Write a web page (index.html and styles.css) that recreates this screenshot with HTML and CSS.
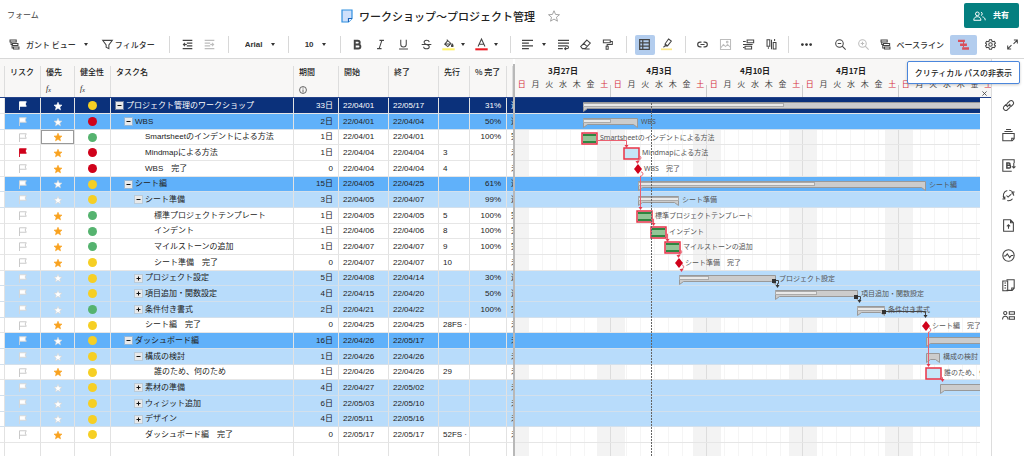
FILE: index.html
```html
<!DOCTYPE html>
<html lang="ja">
<head>
<meta charset="utf-8">
<meta name="viewport" content="width=device-width, initial-scale=1">
<title>ワークショップ〜プロジェクト管理</title>
<link rel="stylesheet" href="styles.css">
</head>
<body>
<header class="titlebar">
  <a class="crumb" href="#">フォーム</a>
  <div class="doc">
    <svg class="doc-icon" viewBox="0 0 12 14"><path d="M1 1h10v8.500l-3.500 3.500H1z" fill="#cfe0fb" stroke="#2f8fe0" stroke-width="1.200"/><path d="M11 9.500H7.500V13" fill="#fff" stroke="#1d63b8" stroke-width="1.200"/></svg>
    <h1>ワークショップ〜プロジェクト管理</h1>
    <button class="plain" aria-label="お気に入り"><svg class="star-icon" viewBox="0 0 16 16"><path d="M8 1l2.100 4.900 5.200.4-4 3.400 1.300 5.200L8 12.100l-4.600 2.800 1.300-5.200-4-3.400 5.200-.4z"/></svg></button>
  </div>
  <button class="share"><svg viewBox="0 0 18 14"><circle cx="6" cy="4" r="2.600"/><path d="M1 13c0-3.500 2-5 5-5s5 1.500 5 5z"/><path d="M11 1.600a2.500 2.500 0 0 1 0 4.800M13 8.200c2.500.4 4 2 4 4.800"/></svg>共有</button>
</header>

<div class="toolbar" role="toolbar">
  <div class="group views">
    <button class="labelled view"><svg class="ic" viewBox="0 0 16 16"><path d="M1.500 1.500h9v3h-9zM5 6.500h8v3H5zM6.500 11.500h8v3h-8zM3 4.500V8h2M4.500 8v5h2"/></svg>ガント ビュー<i class="caret"></i></button>
    <button class="labelled filter"><svg class="ic" viewBox="0 0 16 16"><path d="M1 2h14l-5 6.500V14l-4-2V8.500z"/></svg>フィルター</button>
  </div>
  <div class="group indent">
    <button class="tool" aria-label="インデント解除"><svg class="ic" viewBox="0 0 16 16"><path d="M1 2h14M7 6h8M7 10h8M1 14h14M4.500 5.500L2 8l2.500 2.500M2 8h5"/></svg></button>
    <button class="tool off" aria-label="インデント"><svg class="ic" viewBox="0 0 16 16"><path d="M1 2h14M1 6h8M1 10h8M1 14h14M11.500 5.500L14 8l-2.500 2.500M14 8H9"/></svg></button>
  </div>
  <div class="group font"><select class="font-name" aria-label="フォント"><option>Arial</option></select><i class="caret"></i></div>
  <div class="group size"><select class="font-size" aria-label="サイズ"><option>10</option></select><i class="caret"></i></div>
  <div class="group style">
    <button class="tool wide" aria-label="太字"><svg class="ic" viewBox="0 0 16 16"><path stroke-width="2.800" d="M4 2.500h4.500a2.700 2.700 0 0 1 0 5.400H4zM4 7.900h5.300a2.900 2.900 0 0 1 0 5.800H4z"/></svg></button>
    <button class="tool wide" aria-label="斜体"><svg class="ic" viewBox="0 0 16 16"><path d="M6.500 2H13M3 14h6.500M10 2L6 14"/></svg></button>
    <button class="tool wide" aria-label="下線"><svg class="ic" viewBox="0 0 16 16"><path d="M4 1v6.500a4 4 0 0 0 8 0V1M1.500 14.500h13"/></svg></button>
    <button class="tool wide" aria-label="取り消し線"><svg class="ic" viewBox="0 0 16 16"><path d="M12 4.500C11.500 1 4.500 1 4.500 4.800c0 1.700 1.500 2.500 3.500 3.100 2.500.6 4 1.300 4 3.300 0 4-8 4-8.200 0M1 8h14"/></svg></button>
    <button class="tool" aria-label="背景色"><svg class="ic" viewBox="0 0 16 16"><path d="M7 2.500L2.500 7.500 7 11l4.500-4.500zM5.500 1l2 2M3 7.300h8"/><path d="M13.500 7.500c1.500 2 1.500 3.500 0 3.500s-1.500-1.500 0-3.500z" fill="#444"/><path d="M-1 15h18" stroke="#fff36b" stroke-width="3"/></svg></button><i class="caret"></i>
    <button class="tool text-color" aria-label="文字色"><svg class="ic" viewBox="0 0 16 16"><path d="M3 11L8 0l5 11M4.700 7.500h6.600"/><path d="M-1 15h18" stroke="#ec1c24" stroke-width="3"/></svg></button><i class="caret"></i>
  </div>
  <div class="group para">
    <button class="tool" aria-label="配置"><svg class="ic" viewBox="0 0 16 16"><path d="M0 2h16M0 6h10M0 10h16M0 14h10"/></svg></button><i class="caret align-caret"></i>
    <button class="tool" aria-label="折り返し"><svg class="ic" viewBox="0 0 16 16"><path d="M0 2h16M0 6h16M0 10h7M0 14h7M7 10h6c3 0 3 4 0 4h-3M11.500 12L9.500 14l2 2"/></svg></button>
    <button class="tool" aria-label="書式のクリア"><svg class="ic" viewBox="0 0 16 16"><path d="M10 1.500L15 6l-7.500 8h-4L1 11zM5.500 6.500l5 4.500M6.500 14.500H14"/></svg></button>
    <button class="tool" aria-label="書式のコピー"><svg class="ic" viewBox="0 0 16 16"><path d="M2 1.500h10v4H2zM12 3.500h3V8H7.500v2.500M6 10.500h3V15H6z"/></svg></button>
  </div>
  <div class="group marks">
    <button class="tool on" aria-label="グリッド"><svg class="ic" viewBox="0 0 16 16"><path stroke-width="1.800" d="M1 1h14v14H1zM5.500 1v14M1 5.500h14M1 10.500h14"/></svg></button>
    <button class="tool" aria-label="変更を強調"><svg class="ic" viewBox="0 0 16 16"><path d="M11 0l4 3-5.500 7H6V7zM6 7l3.500 3M6 10l-2.500 2"/><path d="M0 15h16" stroke="#fbe88a" stroke-width="2.500"/></svg></button>
  </div>
  <div class="group insert">
    <button class="tool wide" aria-label="リンク"><svg class="ic" viewBox="0 0 16 16"><path stroke-width="1.700" d="M6.500 4.500h-2a3.500 3.500 0 0 0 0 7h2M9.500 4.500h2a3.500 3.500 0 0 1 0 7h-2M5 8h6"/></svg></button>
    <button class="tool wide off" aria-label="画像"><svg class="ic" viewBox="0 0 16 16"><path d="M.7.700h14.600v14.600H.7zM1 13l4-5 3 3 3-3 4 4"/><circle cx="10.500" cy="4.500" r="1.200"/></svg></button>
    <button class="tool wide" aria-label="行"><svg class="ic" viewBox="0 0 16 16"><path d="M6 1.500h9.500v4H6zM3 10.500h9.500v4H3zM0 3.500h4M0 8h14M0 12.500h2"/></svg></button>
    <button class="tool wide" aria-label="列"><svg class="ic" viewBox="0 0 16 16"><path d="M1.500 1h4v9.500h-4zM10.500 5h4v9.500h-4zM8 1v14M12.500 0v3M3.500 12v2"/></svg></button>
  </div>
  <div class="group more"><button class="tool" aria-label="その他"><svg class="ic" viewBox="0 0 16 16"><g fill="#333" stroke="none"><circle cx="2" cy="8" r="2"/><circle cx="8" cy="8" r="2"/><circle cx="14" cy="8" r="2"/></g></svg></button></div>
  <div class="right-tools">
    <button class="tool wide" aria-label="縮小"><svg class="ic" viewBox="0 0 16 16"><circle cx="6.500" cy="6.500" r="5.500"/><path d="M10.500 10.500L15.500 15.500M4 6.500h5"/></svg></button>
    <button class="tool wide off" aria-label="拡大"><svg class="ic" viewBox="0 0 16 16"><circle cx="6.500" cy="6.500" r="5.500"/><path d="M10.500 10.500L15.500 15.500M4 6.500h5M6.500 4v5"/></svg></button>
    <button class="labelled baseline"><svg class="ic" viewBox="0 0 16 16"><path d="M1.500 1.500h9v3h-9zM5 6.500h9v3H5zM6.500 11.500h8v3h-8zM2.500 4.500V8H5M4 8v5h2.500"/></svg>ベースライン</button>
    <button class="tool critical" aria-label="クリティカル パスの非表示" aria-describedby="tip"><svg class="ic" viewBox="0 0 16 16"><path d="M0 1h10v3.500H0zM3 6.500h10V10H3zM6 12h10v3.500H6z" fill="#d8505c" stroke="none"/><path d="M8 4v8" stroke="#d8505c"/></svg></button>
    <button class="tool" aria-label="設定"><svg class="ic" viewBox="0 0 16 16"><circle cx="8" cy="8" r="2.500"/><path d="M6.500 1h3l.5 2 1.700 1 2-.6 1.500 2.600-1.500 1.300v1.400l1.500 1.300-1.500 2.600-2-.6-1.700 1-.5 2h-3L6 13l-1.700-1-2 .6L.8 10l1.500-1.300V7.300L.8 6l1.500-2.600 2 .6L6 3z"/></svg></button>
    <button class="tool" aria-label="全画面"><svg class="ic" viewBox="0 0 16 16"><path d="M10 1.500h5v5M15 1.500L9.500 7M6 14.500H1v-5M1 14.500L6.500 9"/></svg></button>
  </div>
  <div class="tooltip" id="tip" role="tooltip">クリティカル パスの非表示</div>
</div>

<main class="sheet">
  <table class="grid">
    <colgroup><col class="c-gut"><col class="c-risk"><col class="c-pri"><col class="c-health"><col class="c-task"><col class="c-dur"><col class="c-date"><col class="c-date"><col class="c-pred"><col class="c-pct"><col class="c-rest"></colgroup>
    <thead><tr>
      <th></th><th>リスク</th><th>優先<span class="fx">f<sub>x</sub></span></th><th>健全性<span class="fx">f<sub>x</sub></span></th><th>タスク名</th>
      <th>期間<svg class="info" viewBox="0 0 10 10"><circle cx="5" cy="5" r="4.300"/><path d="M5 2v1.200M5 4.300V8"/></svg></th><th>開始</th><th>終了</th><th>先行</th><th>% 完了</th><th></th>
    </tr></thead>
    <tbody id="rows"></tbody>
  </table>
  <div class="splitter"></div>
  <section class="gantt">
    <div class="calendar" id="calendar"></div>
    <button class="close plain" aria-label="閉じる"><svg viewBox="0 0 6 6"><path d="M.5.500l5 5M5.500.500l-5 5"/></svg></button>
    <div class="chart">
      <div id="stripes"></div>
      <svg class="bars" id="bars" aria-label="ガント チャート"></svg>
    </div>
  </section>
  <nav class="rail">
    <button aria-label="添付"><svg viewBox="0 0 16 16"><path d="M6.500 9.500a3 3 0 0 1 0-4l3-3a3 3 0 0 1 4.200 4.200L11 9.500M9.500 6.500a3 3 0 0 1 0 4l-3 3a3 3 0 0 1-4.200-4.200L5 6.500M6 10l4-4"/></svg></button>
    <button aria-label="会話"><svg viewBox="0 0 16 16"><path d="M1 5.500h14v6.500l-2.500 2.500H1zM15 11.500h-3v3M3 3h10M5 .7h6"/></svg></button>
    <button aria-label="ブループリント"><svg viewBox="0 0 16 16"><path d="M15 5V1H1v14h11M14.500 5v6M12.500 9l2 2 2-2"/><path stroke-width="1.800" d="M6 5h2.500a1.400 1.400 0 0 1 0 2.800H6zM6 7.800h3a1.600 1.600 0 0 1 0 3.200H6z"/></svg></button>
    <button aria-label="更新リクエスト"><svg viewBox="0 0 16 16"><path d="M3 12A6.400 6.400 0 0 1 6.500 1.800M9 1.600a6.400 6.400 0 0 1 5.400 6.800M13 12a6.400 6.400 0 0 1-6.500 2.200M0.500 12.300H3.500V9.300M15.500 3.700H12.500V6.700M5.500 8l2 2 3.500-3.500"/></svg></button>
    <button aria-label="公開"><svg viewBox="0 0 16 16"><path d="M2 1h8.500L14 4.500V15H2zM10.500 1v3.500H14M8 12V7M6 9l2-2 2 2"/></svg></button>
    <button aria-label="アクティビティ"><svg viewBox="0 0 16 16"><circle cx="8" cy="8" r="7"/><path d="M2 8.500h2.500L6.500 6l3 4.500 2-2.500H14"/></svg></button>
    <button aria-label="概要"><svg viewBox="0 0 16 16"><path d="M5.500 1H15v10.500L12.500 14h-7M15 11h-3v3M1 2.500h6v12H1zM3 5h2M3 8h2M3 11h2"/></svg></button>
    <button aria-label="リソース"><svg viewBox="0 0 16 16"><circle cx="4" cy="5" r="2"/><path d="M.7 13c0-3 1.300-4 3.300-4s3.300 1 3.300 4M9 3.500h6.300v3H9zM9 9.500h6.300v3H9z"/></svg></button>
  </nav>
</main>
<script src="script.js"></script>
</body>
</html>
```

FILE: styles.css
```css
* { box-sizing: border-box; }
body {
  margin: 0;
  height: 100vh;
  display: flex;
  flex-direction: column;
  overflow: hidden;
  background: #fff;
  color: #333;
  font: 8px/12px "Liberation Sans", "Noto Sans CJK JP", sans-serif;
}
button, select { font: inherit; color: inherit; background: none; border: 0; padding: 0; margin: 0; }
svg { fill: none; stroke: #444; display: block; flex: none; }

.titlebar { display: flex; align-items: center; height: 31px; padding: 0 5px 0 7px; }
.crumb { flex: 0 0 33%; color: #444; text-decoration: none; }
.doc { display: flex; align-items: center; flex: 1; }
.doc h1 { margin: 0 13px 0 6px; font: 500 11px/16px "Noto Sans CJK JP", sans-serif; color: #222; }
.doc-icon { width: 12px; height: 14px; }
.star-icon { width: 12px; height: 12px; stroke: #888; }
.share { display: flex; align-items: center; gap: 7px; height: 25px; padding: 0 10px 0 9px; border-radius: 2px; background: #047f80; color: #fff; font-weight: 700; }
.share svg { width: 13px; height: 10px; stroke: #fff; stroke-width: 1.400; }

.toolbar { position: relative; display: flex; align-items: center; height: 28px; border-bottom: 1px solid #d8d8d8; font-weight: 500; font-family: "Noto Sans CJK JP", sans-serif; flex: none; }
.group { display: flex; align-items: center; height: 17px; border-left: 1px solid #d8d8d8; }
.views { border: 0; padding: 0 14px 0 9px; }
.labelled { display: flex; align-items: center; white-space: nowrap; }
.view { gap: 6px; margin-right: 13px; }
.view .caret { margin-left: 1px; }
.filter { gap: 2px; }
.ic { width: 11px; height: 11px; stroke-width: 1.500; overflow: visible; }
.tool { width: 22px; height: 20px; display: grid; place-items: center; flex: none; }
.wide { width: 23px; }
.off { opacity: .35; }
.on { width: 20px; margin-right: 1px; background: #b3cdee; border-radius: 2px; }
.caret { width: 6px; height: 12px; display: grid; place-items: center; flex: none; }
.caret::before { content: ""; border: 2px solid transparent; border-top: 3px solid #333; border-bottom: 0; }
.indent { padding: 0 7px; }
.font { padding: 0 12px 0 16px; }
.size { padding: 0 13px 0 16px; }
select { appearance: none; font-family: "Liberation Sans", sans-serif; font-weight: 700; outline: 0; }
.font-name { width: 25px; }
.font-size { width: 16px; }
.style { padding: 0 11px 0 5px; }
.text-color { margin-left: 5px; }
.para { padding: 0 7px 0 6px; }
.align-caret { margin: 0 6px 0 2px; }
.marks { padding: 0 7px 0 8px; }
.insert { padding: 0 5px; }
.more { padding: 0 7px; }
.right-tools { display: flex; align-items: center; margin-left: auto; padding-right: 1px; }
.baseline { gap: 5px; margin: 0 6px 0 5px; }
.critical { width: 27px; margin-right: 2px; background: #b3cdee; border-radius: 2px; }
.tooltip { position: absolute; right: 4px; top: 30px; z-index: 3; padding: 4px 7px; border: 1px solid #4a86dc; border-radius: 2px; background: #fff; box-shadow: 0 1px 3px #0003; color: #222; line-height: 13px; white-space: nowrap; }

.sheet { flex: 1; display: flex; min-height: 0; overflow: hidden; }
.grid { flex: none; width: 513px; height: 100%; table-layout: fixed; border-collapse: separate; border-spacing: 0; align-self: flex-start; }
.c-gut { width: 5px; } .c-risk { width: 36px; } .c-pri { width: 34px; } .c-health { width: 36px; }
.c-task { width: 183px; } .c-dur { width: 45px; } .c-date { width: 50px; } .c-pred { width: 31px; }
.c-pct { width: 37px; } .c-rest { width: 6px; }
th { height: 39px; padding: 7px 0 0 5px; vertical-align: top; text-align: left; font: 500 8px/12px "Noto Sans CJK JP", sans-serif; color: #222; white-space: nowrap; border-bottom: 1px solid #24438a; background: linear-gradient(#ddd, #ddd) right 7px / 1px 32px no-repeat #f8f7f6; }
.fx { display: block; margin-top: 5px; font: italic 8px/12px "Liberation Serif", serif; }
.fx sub { font-size: 6px; vertical-align: -1px; }
.info { width: 8px; height: 8px; margin-top: 8px; stroke-width: 1; }
td { height: 16px; padding: 0; line-height: 12px; overflow: hidden; white-space: nowrap; border-right: 1px solid #e2e2e2; border-bottom: 1px solid #e6e6e6; color: #222; }
tr.short td { height: 15px; }
tr.fill td { height: auto; border-bottom: 0; }
td:last-child { border-right: 0; padding-left: 4px; }
td.gut { background: #fff; }
.l0 { background: #0b317b; }
.l0 td { color: #fff; }
.l1 { background: #60b1fa; }
.l2 { background: #b8dcfb; }
.l1 td, .l2 td, .stripe.l1, .stripe.l2 { border-bottom-color: #d3e0ec; }
.num { text-align: right; padding-right: 5px; }
.date { padding-left: 4px; }
.mark svg { margin: auto; }
.flag { width: 9px; height: 9px; }
.pri { width: 10px; height: 10px; }
.dot { display: block; width: 9px; height: 9px; margin: auto; border-radius: 50%; }
.yellow { background: #f6cf24; }
.red { background: #d0021b; }
.green { background: #55b36f; }
.selected { box-shadow: inset 0 0 0 1px #999; }
.name { display: flex; align-items: center; gap: 3px; }
.d0 { padding-left: 5px; } .d1 { padding-left: 14px; } .d2 { padding-left: 24px; } .d3 { padding-left: 33px; }
.slot { width: 7px; flex: none; }
.toggle { width: 7px; height: 7px; background: #e9e9e9; outline: 1px solid #bbb8; flex: none; }
.toggle svg { width: 7px; height: 7px; stroke: #111; stroke-width: 1; }

.splitter { width: 2px; flex: none; margin-top: 5px; background: #b8b8b8; }
.gantt { position: relative; flex: 1; min-width: 0; display: flex; flex-direction: column; overflow: hidden; }
.calendar { display: flex; height: 39px; flex: none; overflow: hidden; background: #f8f7f6; border-bottom: 1px solid #24438a; }
.week { flex: 0 0 96px; display: grid; grid-template-columns: repeat(7, 1fr); grid-template-rows: 13px 13px; padding-top: 5px; text-align: center; align-items: center; font: 8px/12px "Noto Sans CJK JP", sans-serif; color: #444; background: linear-gradient(#ccc, #ccc) right bottom / 1px 12px no-repeat; }
.week b { grid-column: 1 / 8; font-weight: 600; color: #222; }
.off-day { color: #d6303f; }
.close { position: absolute; right: 4px; top: 32px; }
.close svg { width: 5px; height: 5px; }
.chart { position: relative; flex: 1; margin-right: 11px; overflow: hidden; background:
  repeating-linear-gradient(90deg, #f3f3f3 0 14px, #fff0 14px 82px, #f3f3f3 82px 95px, #ddd 95px 96px),
  repeating-linear-gradient(90deg, #fff 0 13px, #f5f5f5 13px 14px); }
.stripe { height: 16px; border-bottom: 1px solid #e6e6e6; }
.stripe.short { height: 15px; }
.bars { position: absolute; left: 0; top: 0; width: 100%; height: 100%; stroke: none; }
.bars text { font: 7px "Noto Sans", "Noto Sans CJK JP", sans-serif; fill: #555; }
.summary { fill: #ccc; stroke: #999; }
.done { fill: #e9e9e9; stroke: #aaa; }
.task { fill: #c5e6f7; stroke: #ea3347; stroke-width: 1.500; }
.work { fill: #94c596; }
.work-edge { fill: #2f8640; }
.diamond { fill: #d0021b; }
.dep { fill: none; stroke: #ea6070; }
.arrow { fill: #e63b50; }
.dep-dark { fill: none; stroke: #444; }
.arrow-dark { fill: #333; }
.today { stroke: #666; stroke-dasharray: 2 1; }

.rail { flex: 0 0 33px; border-left: 1px solid #ddd; padding-top: 31px; display: flex; flex-direction: column; }
.rail button { height: 30px; display: grid; place-items: center; flex: none; }
.rail svg { width: 13px; height: 13px; stroke-width: 1.300; overflow: visible; }
```

FILE: script.js
```js
// depth, toggle, health, name, duration, start, end, predecessors, % complete, status, level colour
const rows = [
  [0, '-', 'yellow', 'プロジェクト管理のワークショップ', '33日', '22/04/01', '22/05/17', '', '31%', '進', 'l0'],
  [1, '-', 'red', 'WBS', '2日', '22/04/01', '22/04/04', '', '50%', '進', 'l1'],
  [2, '', 'green', 'Smartsheetのインデントによる方法', '1日', '22/04/01', '22/04/01', '', '100%', '完', ''],
  [2, '', 'red', 'Mindmapによる方法', '1日', '22/04/04', '22/04/04', '3', '', '未', ''],
  [2, '', 'red', 'WBS　完了', '0', '22/04/04', '22/04/04', '4', '', '未', ''],
  [1, '-', 'yellow', 'シート編', '15日', '22/04/05', '22/04/25', '', '61%', '進', 'l1'],
  [2, '-', 'yellow', 'シート準備', '3日', '22/04/05', '22/04/07', '', '99%', '進', 'l2'],
  [3, '', 'green', '標準プロジェクトテンプレート', '1日', '22/04/05', '22/04/05', '5', '100%', '完', ''],
  [3, '', 'green', 'インデント', '1日', '22/04/06', '22/04/06', '8', '100%', '完', ''],
  [3, '', 'green', 'マイルストーンの追加', '1日', '22/04/07', '22/04/07', '9', '100%', '完', ''],
  [3, '', 'yellow', 'シート準備　完了', '0', '22/04/07', '22/04/07', '10', '', '未', ''],
  [2, '+', 'yellow', 'プロジェクト設定', '5日', '22/04/08', '22/04/14', '', '30%', '進', 'l2'],
  [2, '+', 'yellow', '項目追加・関数設定', '4日', '22/04/15', '22/04/20', '', '50%', '進', 'l2'],
  [2, '+', 'green', '条件付き書式', '2日', '22/04/21', '22/04/22', '', '100%', '完', 'l2'],
  [2, '', 'yellow', 'シート編　完了', '0', '22/04/25', '22/04/25', '28FS ·', '', '未', ''],
  [1, '-', 'yellow', 'ダッシュボード編', '16日', '22/04/26', '22/05/17', '', '', '未', 'l1'],
  [2, '-', 'yellow', '構成の検討', '1日', '22/04/26', '22/04/26', '', '', '未', 'l2'],
  [3, '', 'yellow', '誰のため、何のため', '1日', '22/04/26', '22/04/26', '29', '', '未', ''],
  [2, '+', 'yellow', '素材の準備', '4日', '22/04/27', '22/05/02', '', '', '未', 'l2'],
  [2, '+', 'yellow', 'ウィジット追加', '6日', '22/05/03', '22/05/10', '', '', '未', 'l2'],
  [2, '+', 'yellow', 'デザイン', '4日', '22/05/11', '22/05/16', '', '', '未', 'l2'],
  [2, '', 'yellow', 'ダッシュボード編　完了', '0', '22/05/17', '22/05/17', '52FS ·', '', '未', '']
];

const flag = (fill, line) =>
  `<svg class="flag" viewBox="0 0 12 12"><path d="M2 12V1h9L9.500 4 11 7H2" fill="${fill}" stroke="${line}" stroke-width="1.200"/></svg>`;
const star = (fill, line) =>
  `<svg class="pri" viewBox="0 0 16 16"><path d="M8 2l1.800 4.200 4.600.4-3.500 3 1.100 4.500L8 11.700l-4 2.400 1.100-4.500-3.500-3 4.600-.4z" fill="${fill}" stroke="${line}"/></svg>`;

document.getElementById('rows').innerHTML = rows.map((r, i) => {
  const [depth, toggle, health, name, dur, start, end, pred, pct, state, level] = r;
  const short = i % 3 === 2 ? 'short' : '';
  const fl = i === 3 ? flag('#d0021b', '#d0021b') : level ? flag('#fff', level === 'l0' ? '#fff' : '#d5d5d5') : flag('#fff', '#c4c4c4');
  const st = level ? star('#fff', level === 'l0' ? '#fff' : '#d5d5d5') : star('#f9a21f', '#f9a21f');
  const box = toggle
    ? `<button class="toggle" aria-label="展開"><svg viewBox="0 0 7 7"><path d="M1.500 3.500h4${toggle === '+' ? 'M3.500 1.500v4' : ''}"/></svg></button>`
    : '<span class="slot"></span>';
  return `<tr class="${level} ${short}"><td class="gut"></td><td class="mark">${fl}</td>` +
    `<td class="mark${i === 2 ? ' selected' : ''}">${st}</td><td class="mark"><i class="dot ${health}"></i></td>` +
    `<td><div class="name d${depth}">${box}<span>${name}</span></div></td><td class="num">${dur}</td>` +
    `<td class="date">${start}</td><td class="date">${end}</td><td class="date">${pred}</td><td class="num">${pct}</td><td>${state}</td></tr>`;
}).join('') + '<tr class="fill">' + '<td></td>'.repeat(11) + '</tr>';

document.getElementById('calendar').innerHTML = ['3月27日', '4月3日', '4月10日', '4月17日', '4月24日'].map(w =>
  `<div class="week"><b>${w}</b>` + [...'日月火水木金土'].map((d, i) =>
    `<span class="${i % 6 ? '' : 'off-day'}">${d}</span>`).join('') + '</div>').join('');

document.getElementById('stripes').innerHTML = rows.map((r, i) =>
  `<div class="stripe ${r[10]} ${i % 3 === 2 ? 'short' : ''}"></div>`).join('');

// Chart items: coordinates are relative to the chart's top left corner.
const rowTop = i => 16 * i - Math.floor(i / 3);
const out = [];
const label = (i, x, t) => out.push(`<text x="${x}" y="${rowTop(i) + 10}">${t}</text>`);
const summary = (i, x, x2, done, t) => {
  const y = rowTop(i) + 4.5;
  out.push(`<path class="summary" d="M${x}.5 ${y}H${x2}.5V${y + 9}L${x2 - 4}.5 ${y + 6}H${x + 4}.5L${x}.5 ${y + 9}z"/>`);
  if (done) out.push(`<rect class="done" x="${x}.5" y="${y + 1}" width="${done - x}" height="3"/>`);
  if (t) label(i, x2 + 4, t);
};
const task = (i, x, done, t) => {
  const y = rowTop(i) + 3;
  out.push(`<rect class="task" x="${x}" y="${y}" width="15" height="11"/>`);
  if (done) out.push(`<rect class="work-edge" x="${x + 1}" y="${y + 1}" width="13" height="9"/><rect class="work" x="${x + 1}" y="${y + 3}" width="13" height="5"/>`);
  label(i, x + 18, t);
};
const diamond = (i, x, t) => {
  const y = rowTop(i) + 8;
  out.push(`<path class="diamond" d="M${x} ${y - 5}l4 5-4 5-4-5z"/>`);
  label(i, x + 6, t);
};
const dep = (d, x, y, dark = '') =>
  out.push(`<path class="dep${dark}" d="${d}"/><path class="arrow${dark}" d="M${x - 2} ${y - 3}h4l-2 3z"/>`);
const square = (x, y) => out.push(`<rect class="arrow-dark" x="${x}" y="${y}" width="4" height="4"/>`);

summary(0, 68, 480, 268);
summary(1, 68, 122, 95, 'WBS');
task(2, 67, true, 'Smartsheetのインデントによる方法');
task(3, 109, false, 'Mindmapによる方法');
diamond(4, 123, 'WBS　完了');
summary(5, 123, 410, 299, 'シート編');
summary(6, 123, 163, 163, 'シート準備');
task(7, 122, true, '標準プロジェクトテンプレート');
task(8, 136, true, 'インデント');
task(9, 150, true, 'マイルストーンの追加');
diamond(10, 164, 'シート準備　完了');
summary(11, 164, 260, 193, 'プロジェクト設定');
summary(12, 260, 342, 301, '項目追加・関数設定');
summary(13, 342, 369, 369, '条件付き書式');
diamond(14, 411, 'シート編　完了');
summary(15, 411, 480, 0);
summary(16, 411, 424, 0, '構成の検討');
task(17, 411, false, '誰のため、何のため');
summary(18, 425, 480, 0);

dep('M83 42.500H111.500V48', 111.5, 50);
dep('M124 58c3 0 2 4 0 4h-1v2', 122.5, 66);
dep('M126 74c3 0 2 4 0 4h-.5V110', 125.5, 112);
dep('M137 121h1.500v5', 138.5, 128);
dep('M151 136h1.500v6', 152.5, 144);
dep('M165 152c2.500 0 2 4 0 4h-1v2', 163.5, 160);
dep('M167 167c2.500 0 2 4 0 4h-.5v2', 166.5, 174);
dep('M414 230c2.500 0 2 4 0 4h-.5V267', 413.5, 269);
dep('M426 276v3.500h1.500v2', 427.5, 284);
dep('M260 182.500h3.500v3h-1v2', 262.5, 190, '-dark');
dep('M342 198.500h3.500v3h-1v2', 344.5, 205, '-dark');
dep('M369 213.500H410.500V218', 410.5, 220, '-dark');
square(257, 181);
square(339, 197);
square(367, 212);
out.push('<path class="today" d="M136.500 5V2000"/>');
document.getElementById('bars').innerHTML = out.join('');
```
